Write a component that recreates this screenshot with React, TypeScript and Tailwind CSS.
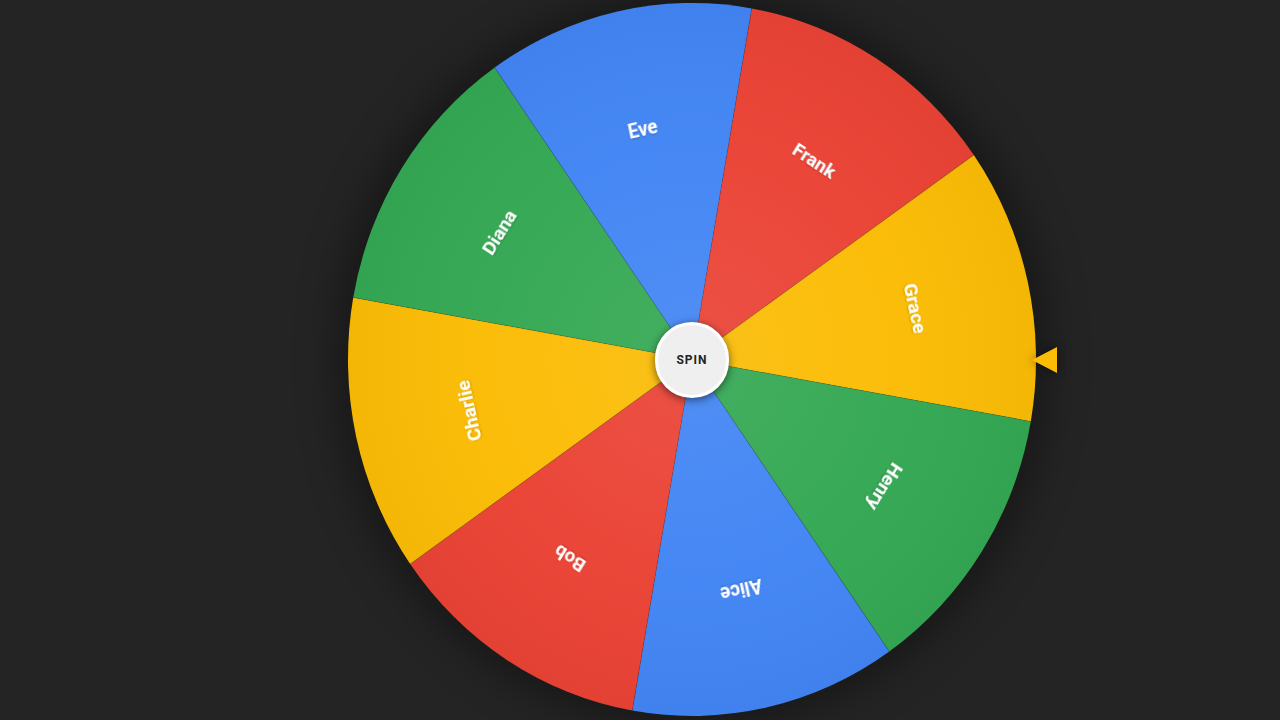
import React from "react";

const names = ["Alice", "Bob", "Charlie", "Diana", "Eve", "Frank", "Grace", "Henry"];
const colors = ["#4285F4", "#EA4335", "#FBBC05", "#34A853"];
const R = 350;

function pt(deg: number) {
  const a = (deg * Math.PI) / 180;
  return [R * Math.cos(a), R * Math.sin(a)];
}

function seg(i: number) {
  const [x1, y1] = pt(55 + i * 45);
  const [x2, y2] = pt(55 + (i + 1) * 45);
  return `M0 0 L${x1.toFixed(2)} ${y1.toFixed(2)} A${R} ${R} 0 0 1 ${x2.toFixed(2)} ${y2.toFixed(2)} Z`;
}

export default function App() {
  return (
    <div className="w-full h-[720px] bg-[#242424] overflow-hidden flex">
      <div className="relative ml-[348px] mt-[3px] w-[688px] h-[713px]">
        <div className="absolute inset-[3px] rounded-full shadow-[0_0_40px_14px_rgba(0,0,0,0.35)]" />
        <svg
          className="relative block"
          width={688}
          height={713}
          viewBox="-350 -350 700 700"
          preserveAspectRatio="none"
        >
          <defs>
            <radialGradient id="shade" cx="0" cy="0" r="350" gradientUnits="userSpaceOnUse">
              <stop offset="0" stopColor="#ffffff" stopOpacity="0.08" />
              <stop offset="0.6" stopColor="#ffffff" stopOpacity="0.02" />
              <stop offset="1" stopColor="#000000" stopOpacity="0.03" />
            </radialGradient>
            <filter id="ts" x="-20%" y="-50%" width="140%" height="200%">
              <feDropShadow dx="0" dy="1" stdDeviation="1" floodColor="#000" floodOpacity="0.2" />
            </filter>
          </defs>
          {names.map((n, i) => (
            <path key={n} d={seg(i)} fill={colors[i % 4]} />
          ))}
          {names.map((n, i) => {
            const [x, y] = pt(55 + i * 45);
            return (
              <line
                key={n + "l"}
                x1={0}
                y1={0}
                x2={x}
                y2={y}
                stroke="rgba(0,0,0,0.12)"
                strokeWidth={1}
              />
            );
          })}
          <circle cx={0} cy={0} r={R} fill="url(#shade)" />
          {names.map((n, i) => {
            const mid = 55 + i * 45 + 22.5;
            return (
              <text
                key={n + "t"}
                transform={`rotate(${mid}) translate(232 0) rotate(90)`}
                textAnchor="middle"
                dominantBaseline="central"
                fill="#ffffff"
                filter="url(#ts)"
                style={{ fontFamily: "Roboto, 'Liberation Sans', sans-serif", fontWeight: 700, fontSize: 19 }}
              >
                {n}
              </text>
            );
          })}
        </svg>
        <div className="absolute left-[307px] top-[319px] w-[74px] h-[76px] rounded-full bg-[#efefef] border-[3px] border-white shadow-[0_2px_8px_rgba(0,0,0,0.55)] flex items-center justify-center">
          <span className="text-[12px] font-bold tracking-[1px] text-[#222] font-['Roboto','Liberation_Sans',sans-serif]">
            SPIN
          </span>
        </div>
        <svg
          className="absolute left-[684px] top-[342px] drop-shadow-[0_0_4px_rgba(0,0,0,0.5)]"
          width={26}
          height={30}
          viewBox="0 0 26 30"
        >
          <polygon points="0,15 25,2 25,28" fill="#FBBC05" />
        </svg>
      </div>
    </div>
  );
}
